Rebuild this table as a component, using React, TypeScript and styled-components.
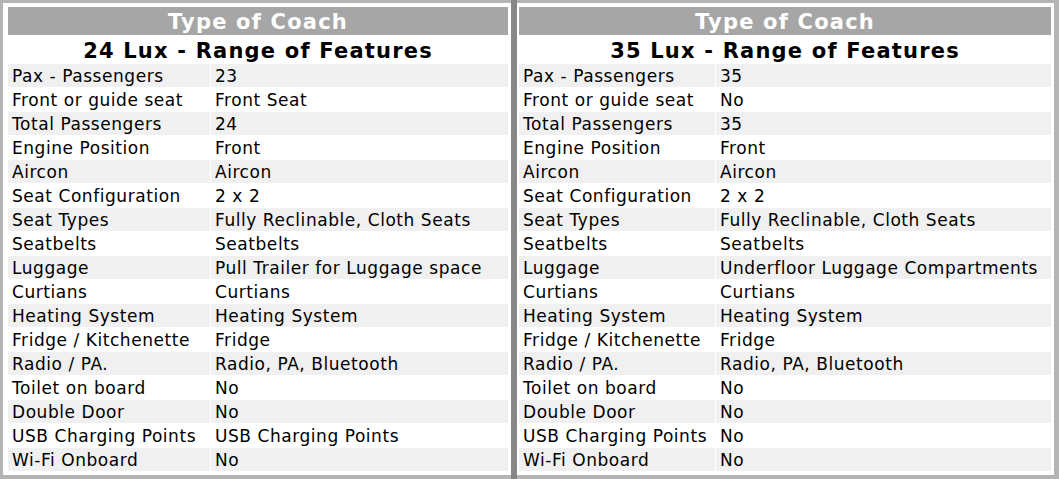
import React from 'react';
import styled, { createGlobalStyle } from 'styled-components';

const GlobalStyle = createGlobalStyle`
  html, body {
    margin: 0;
    padding: 0;
    background: #ffffff;
  }
  body {
    font-family: "DejaVu Sans", Verdana, sans-serif;
    color: #000000;
  }
`;

const Wrapper = styled.div`
  display: flex;
  width: 1059px;
  height: 479px;
  box-sizing: border-box;
`;

const Frame = styled.div<{ $side: 'left' | 'right' }>`
  box-sizing: border-box;
  height: 479px;
  border-top: 3px solid #b4b4b4;
  border-bottom: 4px solid #b4b4b4;
  border-left: ${p => (p.$side === 'left' ? '3px solid #b4b4b4' : 'none')};
  border-right: ${p => (p.$side === 'right' ? '5px solid #b4b4b4' : 'none')};
  padding: ${p => (p.$side === 'left' ? '4px 3px 0 5px' : '4px 3px 0 2px')};
`;

const Divider = styled.div`
  width: 6px;
  height: 479px;
  background: #878787;
`;

const Panel = styled.div<{ $labelWidth: number; $width: number }>`
  display: grid;
  width: ${p => p.$width}px;
  grid-template-columns: ${p => p.$labelWidth}px 1fr;
  grid-template-rows: 28px 27px repeat(17, 23px);
  column-gap: 1px;
  row-gap: 1px;
`;

const HeadCell = styled.div`
  grid-column: 1 / -1;
  background: #a6a6a6;
  color: #ffffff;
  font-weight: bold;
  font-size: 21px;
  letter-spacing: 1.2px;
  line-height: 30px;
  text-align: center;
  overflow: hidden;
`;

const TitleCell = styled.div`
  grid-column: 1 / -1;
  background: #ffffff;
  color: #000000;
  font-weight: bold;
  font-size: 21px;
  letter-spacing: 1.2px;
  line-height: 30px;
  text-align: center;
  overflow: hidden;
`;

const Cell = styled.div<{ $shade: boolean }>`
  background: ${p => (p.$shade ? '#f0f0f0' : '#ffffff')};
  font-size: 17px;
  letter-spacing: 0.55px;
  line-height: 24px;
  padding: 0 4px;
  white-space: nowrap;
  overflow: hidden;
`;

type Row = [string, string];

const labels = [
  'Pax - Passengers',
  'Front or guide seat',
  'Total Passengers',
  'Engine Position',
  'Aircon',
  'Seat Configuration',
  'Seat Types',
  'Seatbelts',
  'Luggage',
  'Curtians',
  'Heating System',
  'Fridge / Kitchenette',
  'Radio / PA.',
  'Toilet on board',
  'Double Door',
  'USB Charging Points',
  'Wi-Fi Onboard',
];

const lux24 = [
  '23',
  'Front Seat',
  '24',
  'Front',
  'Aircon',
  '2 x 2',
  'Fully Reclinable, Cloth Seats',
  'Seatbelts',
  'Pull Trailer for Luggage space',
  'Curtians',
  'Heating System',
  'Fridge',
  'Radio, PA, Bluetooth',
  'No',
  'No',
  'USB Charging Points',
  'No',
];

const lux35 = [
  '35',
  'No',
  '35',
  'Front',
  'Aircon',
  '2 x 2',
  'Fully Reclinable, Cloth Seats',
  'Seatbelts',
  'Underfloor Luggage Compartments',
  'Curtians',
  'Heating System',
  'Fridge',
  'Radio, PA, Bluetooth',
  'No',
  'No',
  'No',
  'No',
];

type CoachProps = {
  title: string,
  values: string[],
  width: number,
  labelWidth: number,
};

const CoachTable: React.FC<CoachProps> = ({ title, values, width, labelWidth }) => {
  const rows: Row[] = labels.map((l, i) => [l, values[i]]);
  return (
    <Panel $width={width} $labelWidth={labelWidth}>
      <HeadCell>Type of Coach</HeadCell>
      <TitleCell>{title}</TitleCell>
      {rows.map(([label, value], i) => (
        <React.Fragment key={label}>
          <Cell $shade={i % 2 === 0}>{label}</Cell>
          <Cell $shade={i % 2 === 0}>{value}</Cell>
        </React.Fragment>
      ))}
    </Panel>
  );
};

export default function App() {
  return (
    <>
      <GlobalStyle />
      <Wrapper>
        <Frame $side="left">
          <CoachTable title="24 Lux - Range of Features" values={lux24} width={500} labelWidth={202} />
        </Frame>
        <Divider />
        <Frame $side="right">
          <CoachTable title="35 Lux - Range of Features" values={lux35} width={532} labelWidth={196} />
        </Frame>
      </Wrapper>
    </>
  );
}
